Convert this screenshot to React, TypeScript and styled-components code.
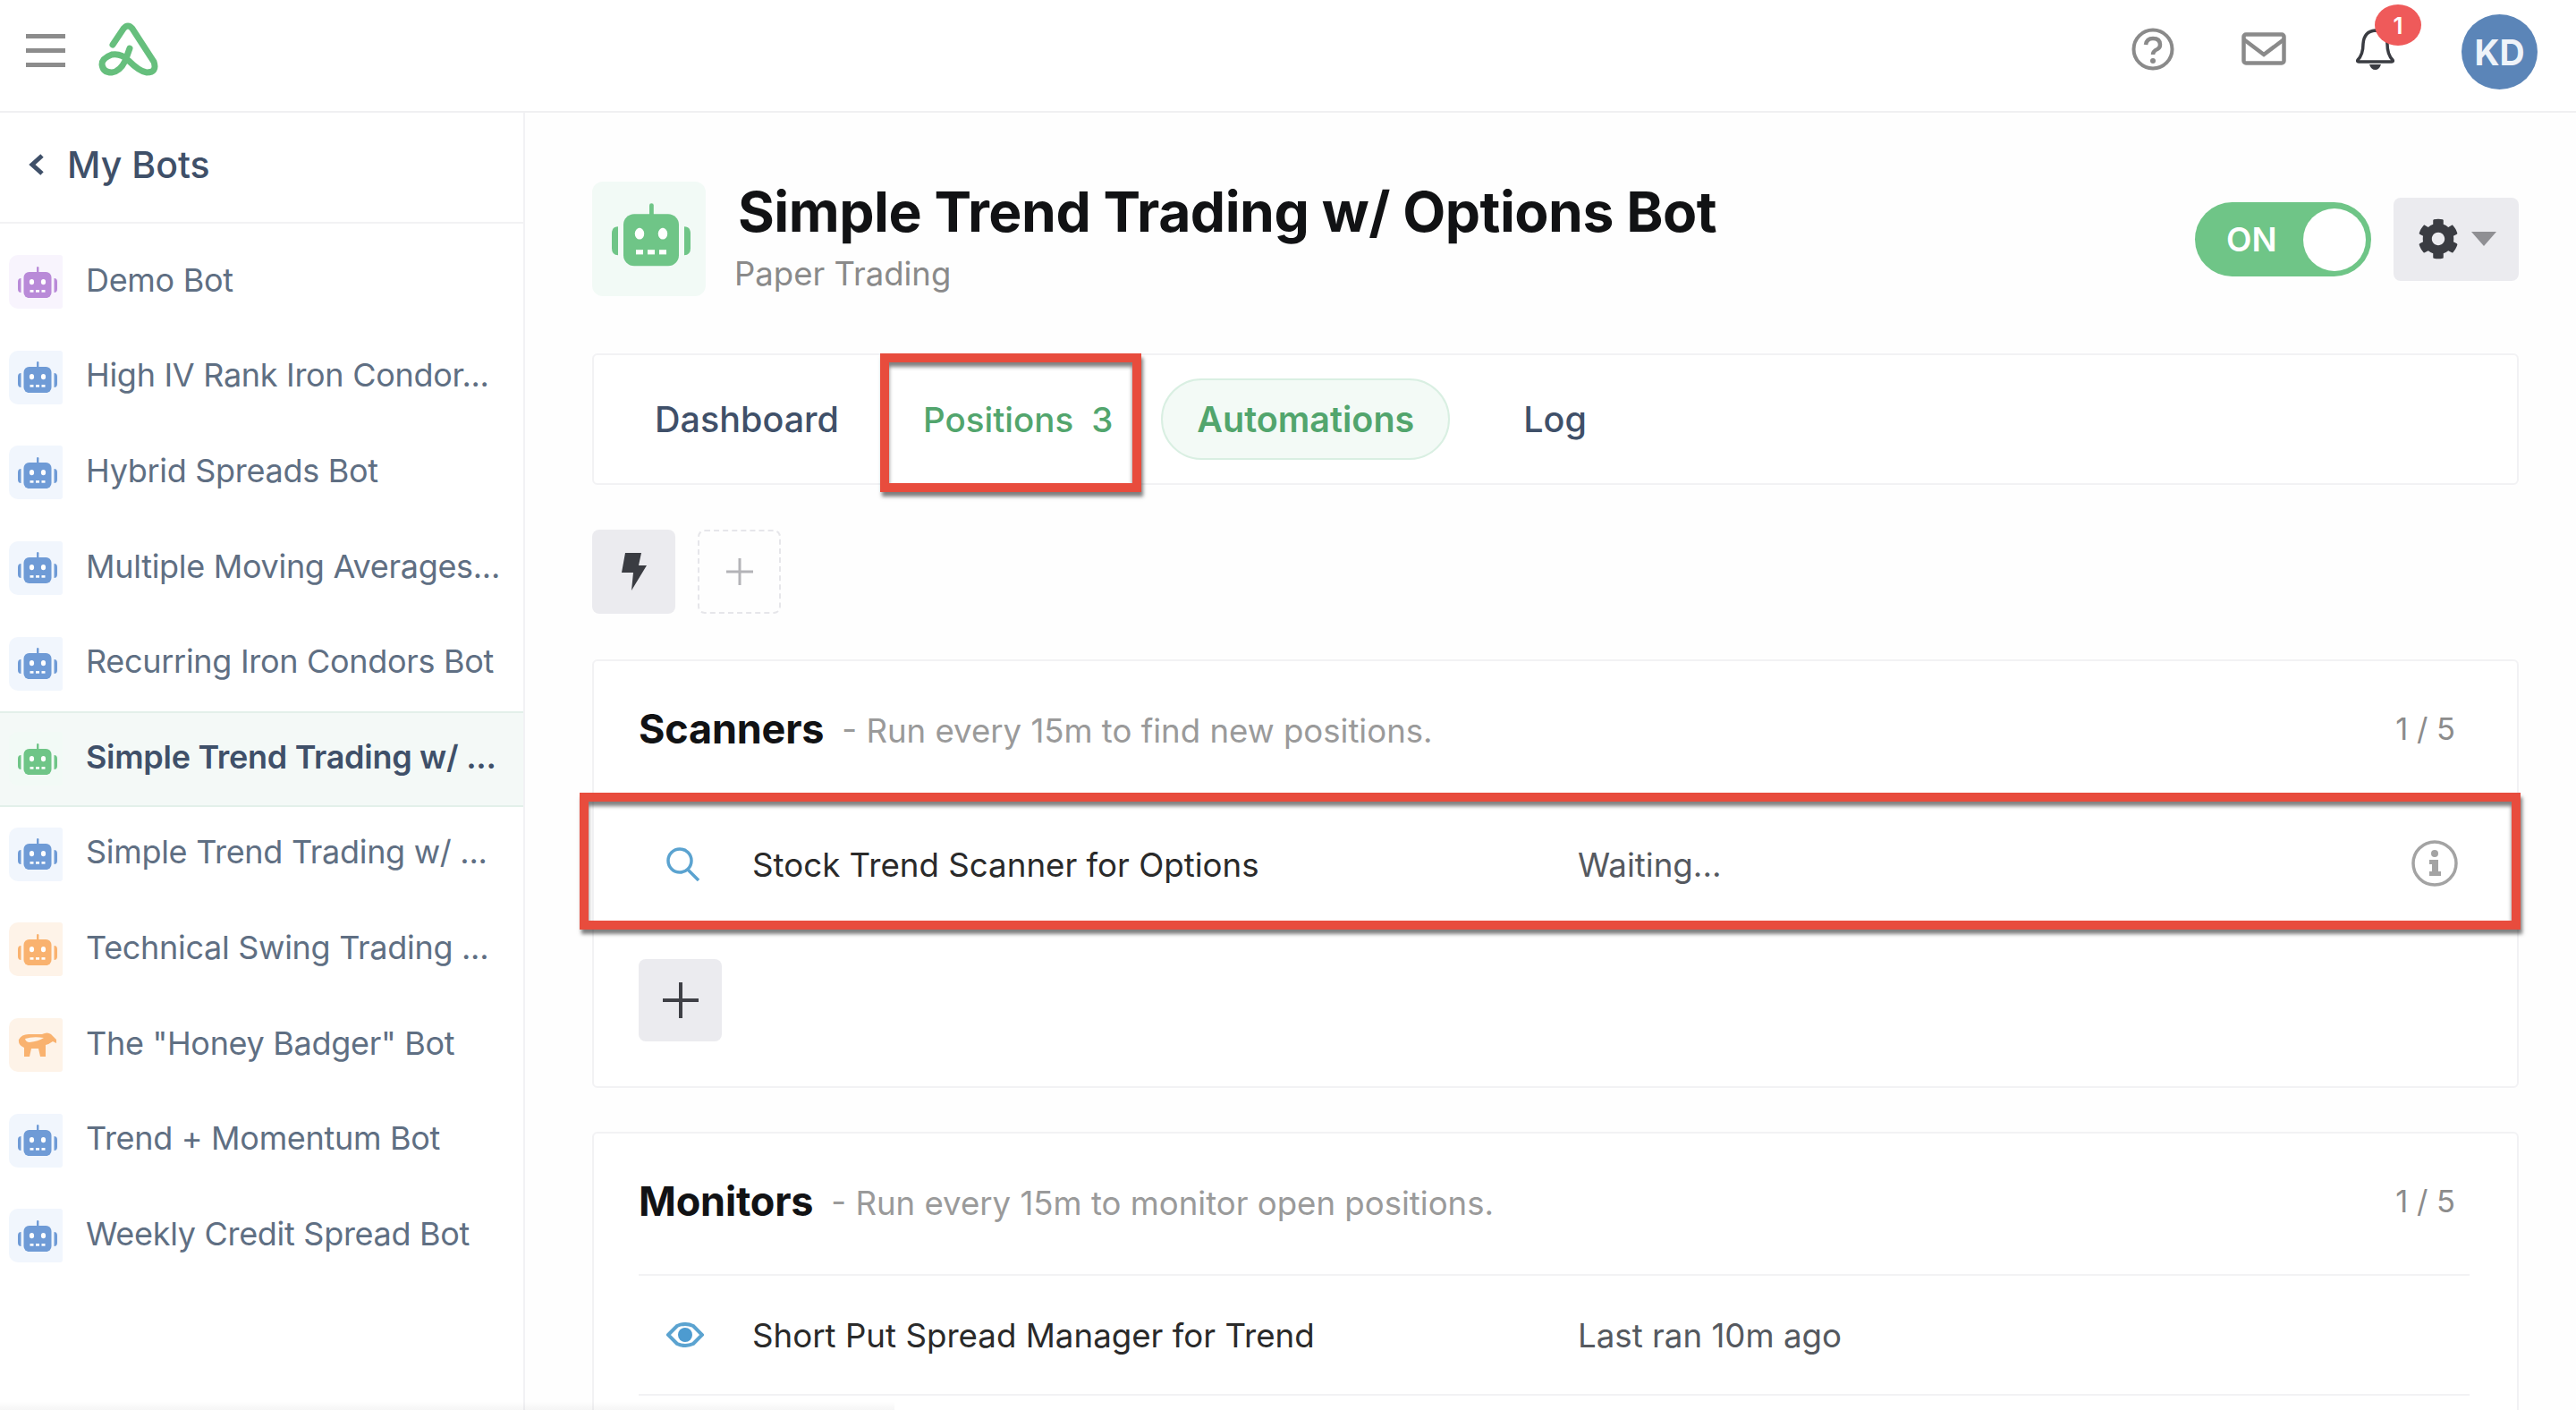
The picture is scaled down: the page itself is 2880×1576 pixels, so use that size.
import styled, { createGlobalStyle } from 'styled-components'
import { FaCog } from 'react-icons/fa'

const GlobalStyle = createGlobalStyle`
  html, body {
    margin: 0;
    padding: 0;
    background: #fefefe;
    font-family: Inter, "Open Sans", sans-serif;
  }
  * { box-sizing: border-box; }
`

const palette = {
  purple: { bg: '#f8f4fd', fg: '#b98ad8' },
  blue: { bg: '#f1f6fd', fg: '#6f9bd6' },
  green: { bg: '#f2faf6', fg: '#6fc587' },
  orange: { bg: '#fef3e8', fg: '#f9b26f' },
}

type Tone = keyof typeof palette

const bots: { name: string; tone: Tone; badger?: boolean; active?: boolean }[] = [
  { name: 'Demo Bot', tone: 'purple' },
  { name: 'High IV Rank Iron Condor...', tone: 'blue' },
  { name: 'Hybrid Spreads Bot', tone: 'blue' },
  { name: 'Multiple Moving Averages...', tone: 'blue' },
  { name: 'Recurring Iron Condors Bot', tone: 'blue' },
  { name: 'Simple Trend Trading w/ ...', tone: 'green', active: true },
  { name: 'Simple Trend Trading w/ ...', tone: 'blue' },
  { name: 'Technical Swing Trading ...', tone: 'orange' },
  { name: 'The "Honey Badger" Bot', tone: 'orange', badger: true },
  { name: 'Trend + Momentum Bot', tone: 'blue' },
  { name: 'Weekly Credit Spread Bot', tone: 'blue' },
]

const Page = styled.div`
  position: relative;
  width: 2880px;
  height: 1576px;
  overflow: hidden;
  display: flex;
  flex-direction: column;
`

const TopBar = styled.header`
  flex: none;
  height: 126px;
  display: flex;
  align-items: center;
  padding: 0 43px 0 29px;
  background: #fff;
  border-bottom: 2px solid #f0f0f2;
`

const Burger = styled.div`
  width: 44px;
  display: flex;
  flex-direction: column;
  gap: 11px;
  margin-top: -12px;

  span {
    height: 5px;
    background: #8c8c8c;
  }
`

const Logo = styled.svg`
  width: 67px;
  height: 60px;
  margin: -15px 0 0 37px;
`

const TopIcons = styled.div`
  margin-left: auto;
  display: flex;
  align-items: center;
`

const HelpIcon = styled.svg`
  width: 48px;
  height: 48px;
  margin-top: -15px;
`

const MailIcon = styled.svg`
  width: 50px;
  height: 37px;
  margin: -15px 0 0 75px;
`

const BellWrap = styled.div`
  position: relative;
  width: 43px;
  height: 48px;
  margin: -14px 0 0 78px;
`

const Badge = styled.span`
  position: absolute;
  top: -26px;
  left: 21px;
  width: 52px;
  height: 46px;
  border-radius: 50%;
  background: #ef5a5a;
  color: #fff;
  font-size: 26px;
  font-weight: 600;
  display: flex;
  align-items: center;
  justify-content: center;
`

const Avatar = styled.div`
  width: 85px;
  height: 84px;
  margin: -8px 0 0 75px;
  border-radius: 50%;
  background: #5b85b8;
  color: #eef3f9;
  font-size: 39px;
  font-weight: 700;
  display: flex;
  align-items: center;
  justify-content: center;
`

const Body = styled.div`
  flex: 1;
  display: flex;
  min-height: 0;
`

const Sidebar = styled.aside`
  flex: none;
  width: 587px;
  background: #fff;
  border-right: 2px solid #f2f2f4;
`

const BackRow = styled.div`
  height: 124px;
  display: flex;
  align-items: center;
  padding: 0 0 6px 32px;
  border-bottom: 2px solid #f2f2f4;
  color: #3f5069;
  font-size: 41px;
  font-weight: 500;
`

const BackChevron = styled.svg`
  width: 18px;
  height: 26px;
  margin-right: 25px;
`

const BotList = styled.ul`
  list-style: none;
  margin: 12px 0 0;
  padding: 0;
`

const BotRow = styled.li<{ $active?: boolean }>`
  height: 106.6px;
  display: flex;
  align-items: center;
  padding-left: 10px;
  color: ${p => (p.$active ? '#3f5069' : '#5f6f83')};
  font-size: 36px;
  font-weight: ${p => (p.$active ? 600 : 400)};
  letter-spacing: -0.3px;
  white-space: nowrap;
  background: ${p => (p.$active ? '#f4f9f7' : 'transparent')};
  box-shadow: ${p => (p.$active ? 'inset 0 2px #e3f0ea, inset 0 -2px #e3f0ea' : 'none')};
`

const BotName = styled.span`
  margin-bottom: 5px;
`

const BotIconBox = styled.div<{ $tone: Tone }>`
  flex: none;
  width: 60px;
  height: 60px;
  margin-right: 26px;
  border-radius: 10px 3px 3px 10px;
  background: ${p => palette[p.$tone].bg};
  display: flex;
  align-items: center;
  justify-content: center;
  color: ${p => palette[p.$tone].fg};
  padding-left: 4px;
`

const Main = styled.main`
  flex: 1;
  min-width: 0;
  padding: 77px 64px 0 75px;
`

const BotHeader = styled.div`
  height: 128px;
  display: flex;
  align-items: center;
`

const HeaderIconBox = styled.div`
  flex: none;
  width: 127px;
  height: 128px;
  border-radius: 12px;
  background: #f2faf6;
  color: #6fc587;
  display: flex;
  align-items: center;
  justify-content: center;
  padding: 0 0 9px 4px;
`

const HeaderText = styled.div`
  margin-left: 32px;
  margin-top: -4px;
`

const BotTitle = styled.h1`
  margin: 0 0 0 4px;
  color: #111214;
  font-size: 62.4px;
  line-height: 72px;
  font-weight: 700;
  letter-spacing: -0.5px;
  white-space: nowrap;
`

const BotSub = styled.div`
  margin-top: 10px;
  color: #8a8a8a;
  font-size: 36.5px;
  line-height: 46px;
`

const HeaderActions = styled.div`
  margin-left: auto;
  display: flex;
  align-items: center;
  gap: 25px;
`

const Toggle = styled.div`
  position: relative;
  width: 197px;
  height: 83px;
  border-radius: 42px;
  background: #6fc587;
  color: #fff;
  font-size: 37px;
  font-weight: 600;
  display: flex;
  align-items: center;
  padding-left: 35px;

  &::after {
    content: '';
    position: absolute;
    top: 7px;
    right: 6px;
    width: 70px;
    height: 70px;
    border-radius: 50%;
    background: #fff;
  }
`

const SettingsButton = styled.div`
  width: 140px;
  height: 93px;
  border-radius: 8px;
  background: #ebebef;
  color: #3a3c42;
  display: flex;
  align-items: center;
  padding-left: 27px;
`

const Caret = styled.span`
  margin-left: 14px;
  width: 0;
  height: 0;
  border-left: 14px solid transparent;
  border-right: 14px solid transparent;
  border-top: 16px solid #8f8f93;
`

const TabsCard = styled.nav`
  height: 147px;
  margin-top: 64px;
  display: flex;
  align-items: center;
  gap: 14px;
  padding-left: 28px;
  background: #fff;
  border: 2px solid #f2f2f4;
  border-radius: 6px;
`

const Tab = styled.div<{ $green?: boolean; $pill?: boolean }>`
  position: relative;
  display: flex;
  align-items: center;
  gap: 20px;
  height: 91px;
  padding: 0 38px;
  font-size: ${p => (p.$green && !p.$pill ? '38.5px' : '39.5px')};
  font-weight: ${p => (p.$pill ? 600 : 500)};
  white-space: nowrap;
  color: ${p => (p.$green ? '#52a56d' : '#3f5069')};
  border-radius: 46px;
  border: 2px solid ${p => (p.$pill ? '#d9efe2' : 'transparent')};
  background: ${p => (p.$pill ? '#f3faf6' : 'transparent')};
`

const LogTab = styled(Tab)`
  margin-left: 28px;
`

const RedBox = styled.div`
  position: absolute;
  border: 10px solid #e84c3d;
  pointer-events: none;
  box-shadow: 2px 5px 4px rgba(0, 0, 0, 0.5), inset 0 5px 4px rgba(0, 0, 0, 0.5);
`

const TabHighlight = styled(RedBox)`
  top: -30px;
  left: -10px;
  width: 292px;
  height: 155px;
`

const RowHighlight = styled(RedBox)`
  top: -12px;
  left: -66px;
  right: -57px;
  bottom: -5px;
`

const ActionRow = styled.div`
  display: flex;
  gap: 25px;
  margin-top: 50px;
`

const ActionButton = styled.div<{ $dashed?: boolean }>`
  width: 93px;
  height: 94px;
  border-radius: 8px;
  display: flex;
  align-items: center;
  justify-content: center;
  background: ${p => (p.$dashed ? 'transparent' : '#ebebef')};
  border: ${p => (p.$dashed ? '2px dashed #e6e6ea' : 'none')};
`

const Card = styled.section<{ $gap: number }>`
  margin-top: ${p => p.$gap}px;
  padding: 0 53px 50px 50px;
  background: #fff;
  border: 2px solid #f2f2f4;
  border-radius: 6px;
`

const CardHeader = styled.div`
  height: 157px;
  display: flex;
  align-items: center;
  padding-bottom: 6px;
`

const CardTitle = styled.h2`
  margin: 0;
  color: #111214;
  font-size: 45px;
  font-weight: 700;
  letter-spacing: -0.2px;
`

const CardHint = styled.span`
  margin: 4px 0 0 20px;
  color: #9a9a9a;
  font-size: 36.6px;
`

const CardCount = styled.span`
  margin: 0 16px 0 auto;
  color: #8c8c8c;
  font-size: 34.5px;
`

const AutoRow = styled.div<{ $divided?: boolean }>`
  position: relative;
  height: 136px;
  display: flex;
  align-items: center;
  color: #2a2a2a;
  font-size: 36.7px;
  margin-top: ${p => (p.$divided ? 0 : '2px')};
  border-top: ${p => (p.$divided ? '2px solid #f2f2f4' : 'none')};
  border-bottom: ${p => (p.$divided ? '2px solid #f2f2f4' : 'none')};
`

const RowIcon = styled.div`
  flex: none;
  width: 127px;
  padding-left: 31px;
  display: flex;
`

const RowName = styled.span`
  flex: none;
  width: 923px;
`

const RowStatus = styled.span`
  color: #55595f;
`

const InfoIcon = styled.svg`
  position: absolute;
  right: 13px;
  top: 41px;
  width: 52px;
  height: 52px;
`

const AddButton = styled.div`
  width: 93px;
  height: 92px;
  margin-top: 38px;
  border-radius: 8px;
  background: #ebebef;
  display: flex;
  align-items: center;
  justify-content: center;
`

const BottomFade = styled.div`
  position: absolute;
  left: 0;
  bottom: 0;
  width: 1000px;
  height: 10px;
  background: linear-gradient(rgba(0, 0, 0, 0), rgba(0, 0, 0, 0.035));
  pointer-events: none;
`

const RobotIcon = ({ size }: { size: number }) => (
  <svg width={size} height={size * 0.8} viewBox="0 0 44 35" fill="currentColor">
    <rect x="21" y="0" width="2.4" height="8" rx="1.2" />
    <rect x="6.5" y="6" width="31" height="29" rx="6" />
    <path d="M3.5 13 Q0 13 0 17 V25 Q0 29 3.5 29 Z" />
    <path d="M40.5 13 Q44 13 44 17 V25 Q44 29 40.5 29 Z" />
    <ellipse cx="15.5" cy="17" rx="2.6" ry="3.2" fill="#fff" />
    <ellipse cx="28.5" cy="17" rx="2.6" ry="3.2" fill="#fff" />
    <rect x="13.5" y="26" width="4" height="2.6" fill="#fff" />
    <rect x="20" y="26" width="4" height="2.6" fill="#fff" />
    <rect x="26.5" y="26" width="4" height="2.6" fill="#fff" />
  </svg>
)

const BadgerIcon = () => (
  <svg width="44" height="28" viewBox="0 0 44 28" fill="currentColor">
    <path d="M1 8 Q4 2 12 2 H27 Q33 -1 37 2 L43 8 L43 12 L39 10 Q35 13 31 14 L31 27 H25 L23 18 H15 L13 27 H7 L7 17 Q0 14 1 8 Z" />
    <path d="M8 7 Q17 4 29 6 Q23 10 13 11 Q9 11 8 7 Z" fill="#fef3e8" />
  </svg>
)

const Plus = ({ size, color, weight }: { size: number; color: string; weight: number }) => (
  <svg width={size} height={size} viewBox="0 0 40 40" stroke={color} strokeWidth={weight}>
    <path d="M20 0 V40 M0 20 H40" />
  </svg>
)

export default function App() {
  return (
    <Page>
      <GlobalStyle />
      <TopBar>
        <Burger>
          <span />
          <span />
          <span />
        </Burger>
        <Logo viewBox="0 0 67 60" fill="none" stroke="#66bf7d" strokeWidth="7" strokeLinecap="round">
          <path d="M16 25 L28 7 Q33 1 38 7 L62 44 Q66 56 54 56 Q46 55 34 43 Q25 34 15 36 Q4 40 4 47 Q5 56 15 56 Q24 55 30 43 L35 29" />
        </Logo>
        <TopIcons>
          <HelpIcon viewBox="0 0 48 48" fill="none" stroke="#8a8a8a" strokeWidth="4">
            <ellipse cx="24" cy="24" rx="21.5" ry="21.5" />
            <path d="M16 19 Q17 12 24 12 Q32 12 32 19 Q32 23 27 25 Q24 27 24 30" strokeWidth="4.5" />
            <circle cx="24" cy="37" r="3" fill="#8a8a8a" stroke="none" />
          </HelpIcon>
          <MailIcon viewBox="0 0 50 37" fill="none" stroke="#8a8a8a" strokeWidth="4.5">
            <rect x="2.5" y="2.5" width="45" height="32" rx="2.5" />
            <path d="M2.5 8 L25 25 L47.5 8" />
          </MailIcon>
          <BellWrap>
            <svg width="43" height="48" viewBox="0 0 43 48" fill="none" stroke="#3a3c42" strokeWidth="3.5">
              <path d="M21.5 3 Q9 4 8 18 Q8 30 2 36 Q1 38 3 38 H40 Q42 38 41 36 Q35 30 35 18 Q34 4 21.5 3 Z" />
              <path d="M15 41 H28 Q26 47 21.5 47 Q17 47 15 41 Z" fill="#3a3c42" stroke="none" />
            </svg>
            <Badge>1</Badge>
          </BellWrap>
          <Avatar>KD</Avatar>
        </TopIcons>
      </TopBar>
      <Body>
        <Sidebar>
          <BackRow>
            <BackChevron viewBox="0 0 18 26" fill="none" stroke="#3f5069" strokeWidth="5">
              <path d="M15 3 L4 13 L15 23" />
            </BackChevron>
            My Bots
          </BackRow>
          <BotList>
            {bots.map((bot, i) => (
              <BotRow key={i} $active={bot.active}>
                <BotIconBox $tone={bot.tone}>{bot.badger ? <BadgerIcon /> : <RobotIcon size={44} />}</BotIconBox>
                <BotName>{bot.name}</BotName>
              </BotRow>
            ))}
          </BotList>
        </Sidebar>
        <Main>
          <BotHeader>
            <HeaderIconBox>
              <RobotIcon size={88} />
            </HeaderIconBox>
            <HeaderText>
              <BotTitle>Simple Trend Trading w/ Options Bot</BotTitle>
              <BotSub>Paper Trading</BotSub>
            </HeaderText>
            <HeaderActions>
              <Toggle>ON</Toggle>
              <SettingsButton>
                <FaCog size={46} />
                <Caret />
              </SettingsButton>
            </HeaderActions>
          </BotHeader>

          <TabsCard>
            <Tab>Dashboard</Tab>
            <Tab $green>
              Positions <span>3</span>
              <TabHighlight />
            </Tab>
            <Tab $green $pill>
              Automations
            </Tab>
            <LogTab>Log</LogTab>
          </TabsCard>

          <ActionRow>
            <ActionButton>
              <svg width="28" height="42" viewBox="0 0 28 42" fill="#3a3c42">
                <path d="M4 0 H22 L19 14 H28 L11 42 L13 22 H0 Z" />
              </svg>
            </ActionButton>
            <ActionButton $dashed>
              <Plus size={30} color="#b4b4b8" weight={4} />
            </ActionButton>
          </ActionRow>

          <Card $gap={51}>
            <CardHeader>
              <CardTitle>Scanners</CardTitle>
              <CardHint>- Run every 15m to find new positions.</CardHint>
              <CardCount>1 / 5</CardCount>
            </CardHeader>
            <AutoRow>
              <RowIcon>
                <svg width="38" height="38" viewBox="0 0 38 38" fill="none" stroke="#5ba3d0" strokeWidth="3.5">
                  <circle cx="15" cy="15" r="13" />
                  <path d="M24 25 L36 37" />
                </svg>
              </RowIcon>
              <RowName>Stock Trend Scanner for Options</RowName>
              <RowStatus>Waiting...</RowStatus>
              <InfoIcon viewBox="0 0 52 52" fill="#a3a3a3">
                <circle cx="26" cy="26" r="24" fill="none" stroke="#a3a3a3" strokeWidth="3.5" />
                <circle cx="26" cy="15" r="4" />
                <path d="M20 22 H30 V35 H33 V40 H20 V35 H23 V27 H20 Z" />
              </InfoIcon>
              <RowHighlight />
            </AutoRow>
            <AddButton>
              <Plus size={40} color="#3f4046" weight={4} />
            </AddButton>
          </Card>

          <Card $gap={49}>
            <CardHeader>
              <CardTitle>Monitors</CardTitle>
              <CardHint>- Run every 15m to monitor open positions.</CardHint>
              <CardCount>1 / 5</CardCount>
            </CardHeader>
            <AutoRow $divided>
              <RowIcon>
                <svg width="42" height="28" viewBox="0 0 42 28" fill="none" stroke="#5ba3d0" strokeWidth="4">
                  <path d="M2 14 L12 4 Q21 0 30 4 L40 14 L30 24 Q21 28 12 24 Z" />
                  <circle cx="21" cy="14" r="8" fill="#4d9bd0" stroke="none" />
                </svg>
              </RowIcon>
              <RowName>Short Put Spread Manager for Trend</RowName>
              <RowStatus>Last ran 10m ago</RowStatus>
            </AutoRow>
          </Card>
        </Main>
      </Body>
      <BottomFade />
    </Page>
  )
}
